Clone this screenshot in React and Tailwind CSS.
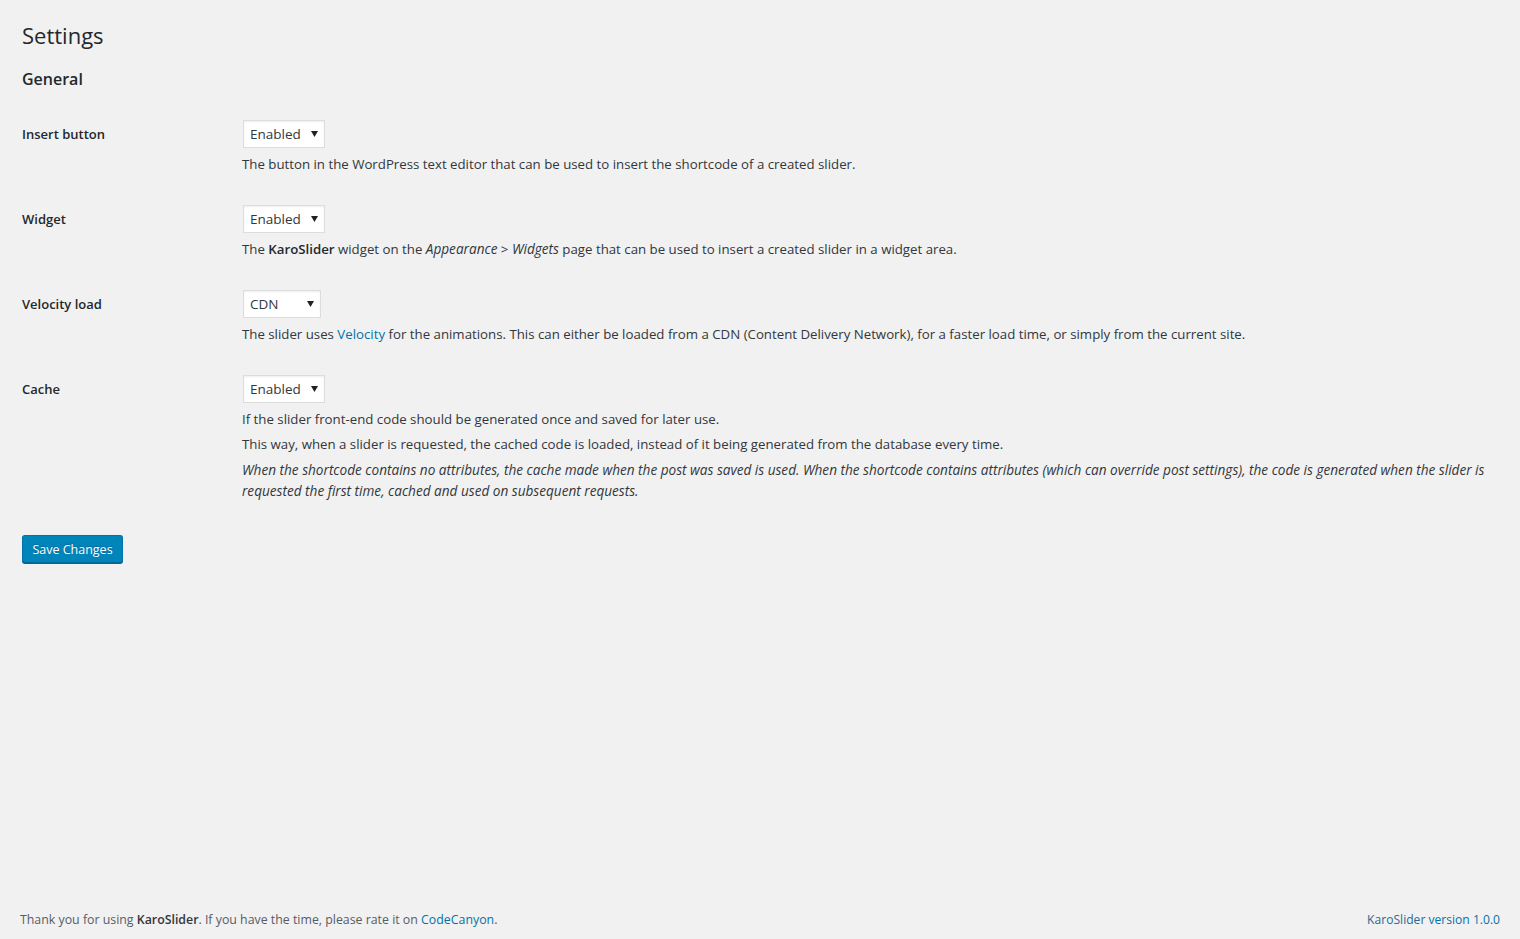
import React from "react";

function Select({ value, width }) {
  return (
    <div className="py-px pl-px">
      <div
        className="flex items-center justify-between h-[28px] bg-white border border-[#ddd] shadow-[inset_0_1px_2px_rgba(0,0,0,0.07)] pl-[6px] pr-[6px] text-[13.5px] text-[#32373c]"
        style={{ width }}
      >
        <span className="leading-[26px]">{value}</span>
        <svg width="7" height="7" viewBox="0 0 7 7" className="mt-[-1px]">
          <path d="M0 1 L7 1 L3.5 7 Z" fill="#222" />
        </svg>
      </div>
    </div>
  );
}

function Row({ label, value, width, children }) {
  return (
    <div className="grid grid-cols-[220px_1fr]">
      <div className="pt-[20px] pb-[20px] text-[13px] leading-[20px] font-semibold text-[#23282d]">
        {label}
      </div>
      <div className="pt-[15px] pb-[15px]">
        <Select value={value} width={width} />
        {children}
      </div>
    </div>
  );
}

function P({ children, className = "" }) {
  return (
    <p className={"mt-[4px] leading-[21px] text-[#32373c] pt-px -mb-px " + className}>
      {children}
    </p>
  );
}

export default function App() {
  return (
    <div className="min-h-screen bg-[#f1f1f1] flex flex-col font-['Open_Sans',sans-serif] text-[#444]">
      <div className="pl-[22px] pr-[20px]">
        <h1 className="pt-[20px] text-[22px] leading-[30px] font-normal text-[#23282d]">
          Settings
        </h1>
        <h2 className="mt-[18px] text-[16px] leading-[22px] font-semibold text-[#23282d]">
          General
        </h2>
        <div className="mt-[14px]">
          <Row label="Insert button" value="Enabled" width={82}>
            <P className="text-[13.25px]">
              The button in the WordPress text editor that can be used to insert the shortcode of a created slider.
            </P>
          </Row>
          <Row label="Widget" value="Enabled" width={82}>
            <P className="text-[13.25px]">
              The <span className="font-semibold text-[#23282d]">KaroSlider</span> widget on the{" "}
              <em className="text-[13.6px] leading-none">Appearance</em> &gt; <em className="text-[13.6px] leading-none">Widgets</em> page that can be used to insert a created slider in a widget area.
            </P>
          </Row>
          <Row label="Velocity load" value="CDN" width={78}>
            <P className="text-[13.25px]">
              The slider uses <span className="text-[#0073aa]">Velocity</span> for the animations. This can either be loaded from a CDN (Content Delivery Network), for a faster load time, or simply from the current site.
            </P>
          </Row>
          <Row label="Cache" value="Enabled" width={82}>
            <P className="text-[13.25px]">If the slider front-end code should be generated once and saved for later use.</P>
            <P className="text-[13.25px]">This way, when a slider is requested, the cached code is loaded, instead of it being generated from the database every time.</P>
            <P className="italic text-[13.6px]">
              When the shortcode contains no attributes, the cache made when the post was saved is used. When the shortcode contains attributes (which can override post settings), the code is generated when the slider is requested the first time, cached and used on subsequent requests.
            </P>
          </Row>
        </div>
        <div className="mt-[20px]">
          <button className="h-[28px] w-[101px] rounded-[3px] bg-[#0085ba] border border-[#0073aa] border-b-[#006799] shadow-[0_1px_0_#006799] text-white text-[12.5px] leading-[27px] [text-shadow:0_-1px_1px_#006799]">
            Save Changes
          </button>
        </div>
      </div>
      <div className="mt-auto flex justify-between items-center px-[20px] pb-[10px] text-[12.35px] leading-[18px] text-[#555d66]">
        <span>
          Thank you for using <span className="font-semibold text-[#32373c]">KaroSlider</span>. If you have the time, please rate it on{" "}
          <span className="text-[#0073aa]">CodeCanyon</span>.
        </span>
        <span className="text-[#0073aa] text-[12.1px]">
          <span className="text-[#2a6a94]">KaroSlider</span> version 1.0.0
        </span>
      </div>
    </div>
  );
}
